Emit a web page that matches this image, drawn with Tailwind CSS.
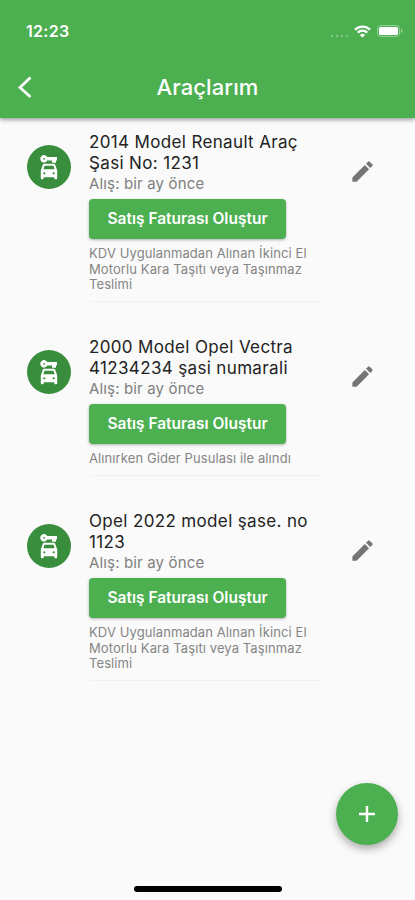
<!DOCTYPE html>
<html lang="tr">
  <head>
    <meta charset="UTF-8" />
    <meta name="viewport" content="width=device-width, initial-scale=1.0" />
    <title>Araçlarım</title>
    <script src="https://cdn.jsdelivr.net/npm/@tailwindcss/browser@4"></script>
  </head>
  <body class="bg-[#fafafa] font-['Inter',sans-serif]">
    <!-- shared icons -->
    <svg class="hidden">
      <symbol id="car-key" viewBox="0 0 18 25">
        <path fill-rule="evenodd" d="M7.200 2A3.700 3.700 0 1 0 7.200 5.600H12v2.100h4V5.600h1V2zM4.100 2.900a.9.9 0 1 1 0 1.800.9.900 0 0 1 0-1.800z" />
        <path fill-rule="evenodd" d="M13.800 8.800H4.200c-.7 0-1.200.4-1.400 1L.8 15.500v7.800c0 .5.4.9.900.9h1.100c.5 0 .9-.4.9-.9v-1.100h10.600v1.100c0 .5.4.9.9.9h1.100c.5 0 .9-.4.9-.9v-7.800l-2-5.700c-.2-.6-.7-1-1.400-1zM4.500 10.700h9l1.100 3.500H3.400zM4.300 19.400a1.100 1.100 0 1 1 0-2.200 1.100 1.100 0 0 1 0 2.200zm9.400 0a1.100 1.100 0 1 1 0-2.200 1.100 1.100 0 0 1 0 2.200z" />
      </symbol>
      <symbol id="pencil" viewBox="0 0 24 24">
        <path d="M3 17.25V21h3.75L17.81 9.94l-3.75-3.75zM20.71 7.04a1 1 0 0 0 0-1.41l-2.34-2.34a1 1 0 0 0-1.41 0l-1.83 1.83 3.75 3.75z" />
      </symbol>
    </svg>

    <div class="relative flex h-[900px] w-[415px] flex-col overflow-hidden">
      <header class="h-[118px] shrink-0 bg-[#4caf50] text-white shadow-[0_2px_4px_rgba(0,0,0,0.35)]">
        <div class="flex h-[62px] items-center justify-between pr-[12px] pl-[26px]">
          <span class="text-[16px] font-semibold tracking-[0.3px]">12:23</span>
          <div class="flex items-center">
            <div class="mt-[9px] mr-[6px] flex gap-[3px]">
              <i class="size-[2px] rounded-full bg-white/40"></i>
              <i class="size-[2px] rounded-full bg-white/40"></i>
              <i class="size-[2px] rounded-full bg-white/40"></i>
              <i class="size-[2px] rounded-full bg-white/40"></i>
            </div>
            <svg class="mr-[6px] h-[13px] w-[17px]" viewBox="0 0 17 13" fill="none" stroke="#fff" stroke-width="2.3">
              <path d="M1 4.7a10.8 10.8 0 0 1 15 0M3.8 7.6a6.7 6.7 0 0 1 9.4 0" />
              <path d="M8.5 12.6 5.9 10a3.7 3.7 0 0 1 5.2 0z" fill="#fff" stroke="none" />
            </svg>
            <svg class="h-[12px] w-[26px]" viewBox="0 0 26 12">
              <rect x=".5" y=".5" width="22" height="11" rx="3" fill="none" stroke="#fff" stroke-opacity=".4" />
              <rect x="2" y="2" width="19" height="8" rx="1.5" fill="#fff" />
              <path d="M24 4v4c.9-.4 1.4-1.1 1.4-2S24.900 4.400 24 4z" fill="#fff" fill-opacity=".5" />
            </svg>
          </div>
        </div>
        <div class="relative flex h-[50px] items-center justify-center">
          <svg class="absolute left-[17px] h-[24px] w-[16px]" viewBox="0 0 16 24" fill="none" stroke="#fff" stroke-width="2.7">
            <path d="M13.500 2.500 3 12.500l10.500 9.500" />
          </svg>
          <h1 class="text-[22px] font-medium tracking-[0.1px]">Araçlarım</h1>
        </div>
      </header>

      <main class="flex flex-col gap-[35.5px] pt-[14px]">
        <article class="flex pl-[27px]">
          <div class="mt-[13px] flex size-[44px] shrink-0 items-center justify-center rounded-full bg-[#388e3c]">
            <svg class="h-[25px] w-[18px] fill-white"><use href="#car-key" /></svg>
          </div>
          <div class="ml-[18px] w-[231px] shrink-0 border-b border-[#f1f1f1] pb-[8px] whitespace-nowrap">
            <h2 class="text-[17px] leading-[21px] tracking-[0.35px] text-[#222]">2014 Model Renault Araç<br />Şasi No: 1231</h2>
            <p class="text-[15px] leading-[19px] tracking-[0.15px] text-[#808080]">Alış: bir ay önce</p>
            <button class="mt-[6px] block h-[40px] w-[197px] rounded bg-[#4caf50] text-[15.5px] font-semibold text-white shadow-[0_1px_3px_rgba(0,0,0,0.3)]">Satış Faturası Oluştur</button>
            <p class="mt-[7px] text-[13px] leading-[15.5px] tracking-[0.1px] text-[#858585]">KDV Uygulanmadan Alınan İkinci El<br />Motorlu Kara Taşıtı veya Taşınmaz<br />Teslimi</p>
          </div>
          <svg class="mt-[26px] ml-[29px] size-[27px] fill-[#757575]"><use href="#pencil" /></svg>
        </article>

        <article class="flex pl-[27px]">
          <div class="mt-[13px] flex size-[44px] shrink-0 items-center justify-center rounded-full bg-[#388e3c]">
            <svg class="h-[25px] w-[18px] fill-white"><use href="#car-key" /></svg>
          </div>
          <div class="ml-[18px] w-[231px] shrink-0 border-b border-[#f1f1f1] pb-[8px] whitespace-nowrap">
            <h2 class="text-[17px] leading-[21px] tracking-[0.35px] text-[#222]">2000 Model Opel Vectra<br />41234234 şasi numarali</h2>
            <p class="text-[15px] leading-[19px] tracking-[0.15px] text-[#808080]">Alış: bir ay önce</p>
            <button class="mt-[6px] block h-[40px] w-[197px] rounded bg-[#4caf50] text-[15.5px] font-semibold text-white shadow-[0_1px_3px_rgba(0,0,0,0.3)]">Satış Faturası Oluştur</button>
            <p class="mt-[7px] text-[13px] leading-[15.5px] tracking-[0.1px] text-[#858585]">Alınırken Gider Pusulası ile alındı</p>
          </div>
          <svg class="mt-[26px] ml-[29px] size-[27px] fill-[#757575]"><use href="#pencil" /></svg>
        </article>

        <article class="flex pl-[27px]">
          <div class="mt-[13px] flex size-[44px] shrink-0 items-center justify-center rounded-full bg-[#388e3c]">
            <svg class="h-[25px] w-[18px] fill-white"><use href="#car-key" /></svg>
          </div>
          <div class="ml-[18px] w-[231px] shrink-0 border-b border-[#f1f1f1] pb-[8px] whitespace-nowrap">
            <h2 class="text-[17px] leading-[21px] tracking-[0.35px] text-[#222]">Opel 2022 model şase. no<br />1123</h2>
            <p class="text-[15px] leading-[19px] tracking-[0.15px] text-[#808080]">Alış: bir ay önce</p>
            <button class="mt-[6px] block h-[40px] w-[197px] rounded bg-[#4caf50] text-[15.5px] font-semibold text-white shadow-[0_1px_3px_rgba(0,0,0,0.3)]">Satış Faturası Oluştur</button>
            <p class="mt-[7px] text-[13px] leading-[15.5px] tracking-[0.1px] text-[#858585]">KDV Uygulanmadan Alınan İkinci El<br />Motorlu Kara Taşıtı veya Taşınmaz<br />Teslimi</p>
          </div>
          <svg class="mt-[26px] ml-[29px] size-[27px] fill-[#757575]"><use href="#pencil" /></svg>
        </article>
      </main>

      <!-- add button -->
      <button class="absolute top-[783px] left-[336px] flex size-[62px] items-center justify-center rounded-full bg-[#4caf50] shadow-[0_4px_8px_rgba(0,0,0,0.32)]">
        <svg class="size-[16px]" viewBox="0 0 16 16" stroke="#fff" stroke-width="2.4">
          <path d="M8 0v16M0 8h16" />
        </svg>
      </button>

      <!-- home indicator -->
      <div class="absolute bottom-[8px] left-[134px] h-[6px] w-[148px] rounded-full bg-black"></div>
    </div>
  </body>
</html>
